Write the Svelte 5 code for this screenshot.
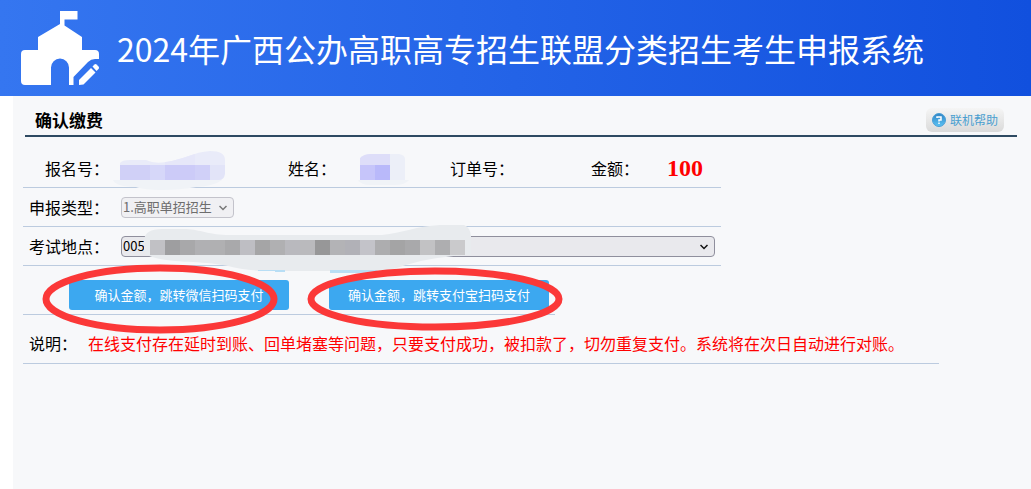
<script lang="ts">
  let examType = '1';
  let site = '005';

  // mosaic tiles, each one 15px wide
  const numberTiles = ['#d0d0f7', '#d0d0f7', '#d6d7f9', '#cccbf8', '#cccbf8', '#d0d0f8', '#e2e4f8'];
  const siteTiles = [
    '#c1c1c5', '#9e9ea0', '#a8a8aa', '#b0b0b3', '#b0b0b2', '#a9a9ab', '#bebec3',
    '#a5a5a6', '#b0b0b2', '#b9b9be', '#bababd', '#979798', '#b3b3b6', '#b1b1b7',
    '#c3c3c9', '#adadaf', '#a4a4a5', '#a9a9ab', '#c2c2c4', '#aeaeb0', '#cacacc'
  ];
</script>

<div class="page">
  <header class="banner">
    <svg class="logo" viewBox="21 11 78 74" aria-hidden="true">
      <path
        fill="#fff"
        d="M60 11h17.500v8.500H64.500V25.500L82 37v13h13q4 0 4 4v5h-4q-4 0-7 3L73.500 77v8H69V67.500a9 9 0 0 0-18 0V85H25q-4 0-4-4V54q0-4 4-4h13V37L60 24z"
      />
      <path fill="#fff" d="M79 80l12-12 4.500 4.500L83.500 84.500 79 85z" />
      <path fill="#fff" d="M92.500 66.500l2-2q1-1 2 0l2 2q1 1 0 2.500l-2 2z" />
    </svg>
    <h1>2024年广西公办高职高专招生联盟分类招生考生申报系统</h1>
  </header>

  <main>
    <div class="section-head">
      <h2>确认缴费</h2>
      <button class="help" type="button">
        <svg viewBox="0 0 14 14" aria-hidden="true">
          <defs>
            <linearGradient id="ball" x1="0" y1="0" x2="0" y2="1">
              <stop offset="0" stop-color="#2f83c4" />
              <stop offset="1" stop-color="#5cc4f5" />
            </linearGradient>
          </defs>
          <circle cx="7" cy="7" r="6.500" fill="url(#ball)" stroke="#4b9fd6" />
          <path d="M5 5V4h4v3H7v1.500M7 9.500V11" fill="none" stroke="#fff" stroke-width="1.500" />
        </svg>
        联机帮助
      </button>
    </div>

    <form class="pay">
      <div class="row info">
        <span class="label">报名号：</span>
        <span class="value">
          <svg class="mask number" viewBox="113 148 114 44" aria-hidden="true">
            <clipPath id="number-shape">
              <path d="M120 163q2-3 10-3h16q8 4 20 2c16-2 28-10 44-11q15 0 15 9v14q-1 6-6 6H120z" />
            </clipPath>
            <path fill="#f0f3f7" d="M113 180h109q-8 6-26 7c-20 4-50 4-60 0q-20 0-23-7z" />
            <g clip-path="url(#number-shape)">
              <rect x="120" y="148" width="107" height="17" fill="#e9ebf9" />
              <rect x="165" y="148" width="30" height="17" fill="#e6e7f9" />
              {#each numberTiles as fill, i}
                <rect x={120 + i * 15} y="165" width="15" height="15" {fill} />
              {/each}
            </g>
          </svg>
        </span>
        <span class="label">姓名：</span>
        <span class="value">
          <svg class="mask name" viewBox="358 152 52 34" aria-hidden="true">
            <path fill="#f0f3f7" d="M358 180h51q-4 5-14 5h-25q-9 0-12-5z" />
            <path fill="#dedef9" d="M360 158q4-4 10-4h20v11h-30z" />
            <path fill="#eceff8" d="M390 154h9q6 1 6 5v21h-15z" />
            <rect x="360" y="165" width="15" height="15" fill="#c6c5fa" />
            <rect x="375" y="165" width="15" height="15" fill="#b9b9fa" />
          </svg>
        </span>
        <span class="label">订单号：</span>
        <span class="value"></span>
        <span class="label">金额：</span>
        <strong class="amount">100</strong>
      </div>

      <div class="row">
        <label for="exam-type">申报类型：</label>
        <span class="select">
          <select id="exam-type" bind:value={examType} disabled>
            <option value="1">1.高职单招招生</option>
          </select>
          <svg class="chevron" viewBox="0 0 8 6" aria-hidden="true"><path d="M0.500 1L4 4.500 7.500 1" /></svg>
        </span>
      </div>

      <div class="row">
        <label for="exam-site">考试地点：</label>
        <span class="select wide">
          <select id="exam-site" bind:value={site}>
            <option value="005">005</option>
          </select>
          <svg class="chevron" viewBox="0 0 8 6" aria-hidden="true"><path d="M0.500 1L4 4.500 7.500 1" /></svg>
          <svg class="mask site" viewBox="143 224 330 50" aria-hidden="true">
            <path
              fill="#e8ebee"
              d="M144 240q1-11 18-11h24c16 1 20 5 40 6h156c20-2 35-9 58-10h24q6 2 7 11v19h-6q-40 3-65 12-12 4-24 4H262q-20-1-34-5c-30-6-50-2-76-9q-8-2-8-8z"
            />
            <path fill="#b8def5" d="M258 270h27v2h-10v-1h-17zM330 270h48l-6 3h-42z" />
            {#each siteTiles as fill, i}
              <rect x={150 + i * 15} y="240" width="15" height="15" {fill} />
            {/each}
          </svg>
        </span>
      </div>

      <div class="row actions">
        <span class="action">
          <button type="button">确认金额，跳转微信扫码支付</button>
          <svg class="ring wechat" viewBox="42 264 236 70" aria-hidden="true">
            <ellipse cx="160" cy="299" rx="114" ry="31" />
          </svg>
        </span>
        <span class="action">
          <button type="button">确认金额，跳转支付宝扫码支付</button>
          <svg class="ring alipay" viewBox="306 266 258 66" aria-hidden="true">
            <ellipse cx="435" cy="299" rx="124" ry="28" />
          </svg>
        </span>
      </div>
    </form>

    <p class="note">
      <span>说明：</span>
      <span class="warn">在线支付存在延时到账、回单堵塞等问题，只要支付成功，被扣款了，切勿重复支付。系统将在次日自动进行对账。</span>
    </p>
  </main>
</div>

<style>
  .page {
    display: flex;
    flex-direction: column;
    min-height: 100vh;
    color: #000;
    background: #fff;
    font: 16px/24px "Noto Sans CJK SC", sans-serif;
  }

  .banner {
    display: flex;
    align-items: center;
    gap: 18px;
    height: 96px;
    padding: 0 21px;
    background: linear-gradient(to right, #3576f0, #1150de);
  }

  .logo {
    flex: none;
    width: 78px;
    height: 74px;
  }

  h1 {
    margin: 0;
    color: #fff;
    font-size: 32px;
    font-weight: 400;
    line-height: 40px;
    white-space: nowrap;
  }

  main {
    flex: 1;
    margin-left: 13px;
    padding: 0 14px 0 10px;
    background: #f7f8fa;
  }

  .section-head {
    display: flex;
    align-items: center;
    justify-content: space-between;
    box-sizing: border-box;
    height: 41px;
    margin-left: 2px;
    padding: 8px 13px 0 10px;
    border-bottom: 2px solid #2e4a62;
  }

  h2 {
    margin: 0;
    font-size: 17px;
    font-weight: 700;
    line-height: 24px;
  }

  .help {
    display: flex;
    align-items: center;
    gap: 4px;
    height: 24px;
    padding: 0 6px;
    border: 0;
    border-radius: 6px;
    background: linear-gradient(#f5f5f5, #dadada);
    color: #4a9fd0;
    font: 12px/24px "Noto Sans CJK SC", sans-serif;
  }

  .help svg {
    width: 14px;
    height: 14px;
  }

  .pay {
    max-width: 698px;
  }

  .row {
    display: flex;
    align-items: center;
    gap: 12px;
    box-sizing: border-box;
    height: 39px;
    border-bottom: 1px solid #bccbdf;
  }

  .row label {
    flex: none;
    width: 86px;
    text-align: right;
  }

  .info {
    display: grid;
    grid-template-columns: 86px 155px 48px 90px 64px 53px 48px 1fr;
    height: 51px;
    padding-top: 12px;
  }

  .label {
    text-align: right;
    white-space: nowrap;
  }

  .value {
    position: relative;
    height: 24px;
  }

  .amount {
    padding-left: 16px;
    color: #f00;
    font: bold 24px/24px "Liberation Serif", serif;
  }

  .select {
    position: relative;
    display: flex;
  }

  .wide {
    flex: 1;
    margin-right: 6px;
  }

  select {
    appearance: none;
    box-sizing: border-box;
    width: 100%;
    height: 21px;
    margin: 0;
    padding: 0 21px 0 1px;
    border: 1px solid #8f8f9d;
    border-radius: 4px;
    background: #e9e9ed;
    color: #000;
    font: 13px/18px "Noto Sans CJK SC", sans-serif;
  }

  select:disabled {
    border-color: #c3c3cb;
    background: #f0f0f3;
    color: #6d6d6d;
    opacity: 1;
  }

  .chevron {
    position: absolute;
    top: 8px;
    right: 7px;
    width: 8px;
    height: 6px;
    fill: none;
    stroke: #111;
    stroke-width: 1.5;
    pointer-events: none;
  }

  select:disabled + .chevron {
    stroke: #777;
  }

  .mask,
  .ring {
    position: absolute;
    pointer-events: none;
  }

  .number {
    top: -8px;
    left: -8px;
    width: 114px;
    height: 44px;
  }

  .name {
    top: -4px;
    left: 10px;
    width: 52px;
    height: 34px;
  }

  .site {
    top: -12px;
    left: 22px;
    z-index: 1;
    width: 330px;
    height: 50px;
  }

  .actions {
    gap: 40px;
    width: fit-content;
    height: 49px;
    padding: 10px 6px 0 46px;
  }

  .action {
    position: relative;
    display: flex;
  }

  .action button {
    width: 220px;
    height: 30px;
    padding: 0;
    border: 0;
    border-radius: 3px;
    background: #3ca8f0;
    color: #fff;
    font: 13px/30px "Noto Sans CJK SC", sans-serif;
  }

  .ring {
    z-index: 2;
    fill: none;
    stroke: #fb3838;
    stroke-width: 7;
  }

  .wechat {
    top: -16px;
    left: -27px;
    width: 236px;
    height: 70px;
  }

  .alipay {
    top: -14px;
    left: -23px;
    width: 258px;
    height: 66px;
  }

  .note {
    display: flex;
    gap: 11px;
    width: fit-content;
    margin: 0;
    padding: 16px 35px 8px 6px;
    border-bottom: 1px solid #bccbdf;
  }

  .note span:first-child {
    flex: none;
  }

  .warn {
    color: #f00;
  }
</style>
